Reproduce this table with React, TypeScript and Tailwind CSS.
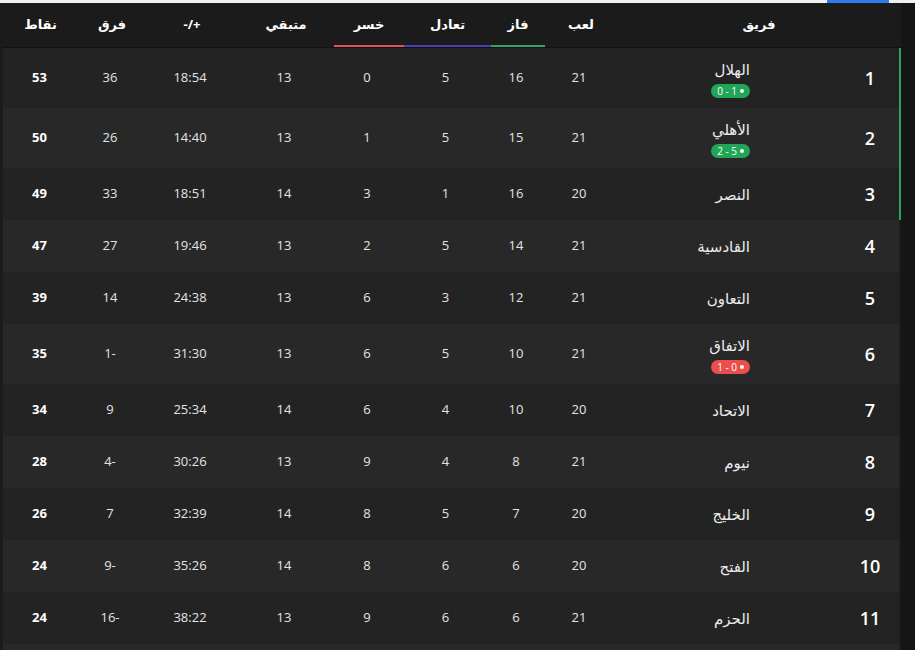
import React from "react";

type Row = {
  rank: number;
  team: string;
  played: number;
  won: number;
  drawn: number;
  lost: number;
  left: number;
  goals: string;
  diff: string;
  points: number;
  badge?: { text: string; tone: "win" | "loss" };
};

const rows: Row[] = [
  { rank: 1, team: "الهلال", played: 21, won: 16, drawn: 5, lost: 0, left: 13, goals: "18:54", diff: "36", points: 53, badge: { text: "0 - 1", tone: "win" } },
  { rank: 2, team: "الأهلي", played: 21, won: 15, drawn: 5, lost: 1, left: 13, goals: "14:40", diff: "26", points: 50, badge: { text: "2 - 5", tone: "win" } },
  { rank: 3, team: "النصر", played: 20, won: 16, drawn: 1, lost: 3, left: 14, goals: "18:51", diff: "33", points: 49 },
  { rank: 4, team: "القادسية", played: 21, won: 14, drawn: 5, lost: 2, left: 13, goals: "19:46", diff: "27", points: 47 },
  { rank: 5, team: "التعاون", played: 21, won: 12, drawn: 3, lost: 6, left: 13, goals: "24:38", diff: "14", points: 39 },
  { rank: 6, team: "الاتفاق", played: 21, won: 10, drawn: 5, lost: 6, left: 13, goals: "31:30", diff: "1-", points: 35, badge: { text: "1 - 0", tone: "loss" } },
  { rank: 7, team: "الاتحاد", played: 20, won: 10, drawn: 4, lost: 6, left: 14, goals: "25:34", diff: "9", points: 34 },
  { rank: 8, team: "نيوم", played: 21, won: 8, drawn: 4, lost: 9, left: 13, goals: "30:26", diff: "4-", points: 28 },
  { rank: 9, team: "الخليج", played: 20, won: 7, drawn: 5, lost: 8, left: 14, goals: "32:39", diff: "7", points: 26 },
  { rank: 10, team: "الفتح", played: 20, won: 6, drawn: 6, lost: 8, left: 14, goals: "35:26", diff: "9-", points: 24 },
  { rank: 11, team: "الحزم", played: 21, won: 6, drawn: 6, lost: 9, left: 13, goals: "38:22", diff: "16-", points: 24 },
];

const grid =
  "grid grid-cols-[58px_226px_72px_54px_87px_70px_96px_92px_68px_1fr] items-center";

function Badge({ text, tone }: { text: string; tone: "win" | "loss" }) {
  return (
    <span
      className={
        "mt-[4px] inline-flex h-[14px] items-center gap-[3px] rounded-full px-[6px] text-[10px] leading-none text-white " +
        (tone === "win" ? "bg-[#20a656]" : "bg-[#ec4d4d]")
      }
    >
      <span className="h-[4px] w-[4px] rounded-full bg-white" />
      <span dir="ltr">{text}</span>
    </span>
  );
}

export default function App() {
  return (
    <div
      className="h-[650px] w-[915px] overflow-hidden bg-[#151515]"
      style={{ fontFamily: '"Open Sans", "DejaVu Sans", sans-serif' }}
    >
      <div className="flex h-[3px] bg-[#f1f1f1]">
        <div className="ml-[827px] h-[3px] w-[62px] bg-[#2f7cf0]" />
      </div>
      <div className="flex">
        <div className="w-[3px] bg-[#1b1b1b]" />
        <div dir="rtl" className="w-[898px]">
          {/* header */}
          <div className={grid + " h-[45px] border-b border-[#121212] bg-[#1b1b1b] text-[13px] font-bold text-white"}>
            <div className="col-span-2 text-center">فريق</div>
            <div className="text-center">لعب</div>
            <div className="relative flex h-full items-center justify-center">
              فاز
              <span className="absolute bottom-0 left-0 right-0 h-[2px] bg-[#35a269]" />
            </div>
            <div className="relative flex h-full items-center justify-center">
              تعادل
              <span className="absolute bottom-0 left-0 right-0 h-[2px] bg-[#4b3fb0]" />
            </div>
            <div className="relative flex h-full items-center justify-center">
              خسر
              <span className="absolute bottom-0 left-0 right-0 h-[2px] bg-[#d8555a]" />
            </div>
            <div className="text-center">متبقي</div>
            <div className="text-center">+/-</div>
            <div className="text-center">فرق</div>
            <div className="text-center">نقاط</div>
          </div>
          {rows.map((r, i) => (
            <div
              key={r.rank}
              className={
                grid +
                " border-r-2 text-[13px] text-[#e4e4e4] " +
                (r.badge ? "h-[60px] " : "h-[52px] ") +
                (i % 2 === 0 ? "bg-[#232323] " : "bg-[#282828] ") +
                (r.rank <= 3 ? "border-[#2fa15f]" : "border-[#1c1c1c]")
              }
            >
              <div className="text-center text-[18px] font-semibold text-white">{r.rank}</div>
              <div className="flex flex-col items-start pr-[91px]">
                <span className="text-[15px] leading-[22px] text-[#ececec]">{r.team}</span>
                {r.badge && <Badge text={r.badge.text} tone={r.badge.tone} />}
              </div>
              <div className="text-center">{r.played}</div>
              <div className="text-center">{r.won}</div>
              <div className="text-center">{r.drawn}</div>
              <div className="text-center">{r.lost}</div>
              <div className="text-center">{r.left}</div>
              <div className="text-center" dir="ltr">{r.goals}</div>
              <div className="text-center" dir="ltr">{r.diff}</div>
              <div className="text-center font-bold text-white">{r.points}</div>
            </div>
          ))}
          {/* next row, cut off by the viewport */}
          <div className="h-[52px] border-r-2 border-[#1c1c1c] bg-[#282828]" />
        </div>
      </div>
    </div>
  );
}
